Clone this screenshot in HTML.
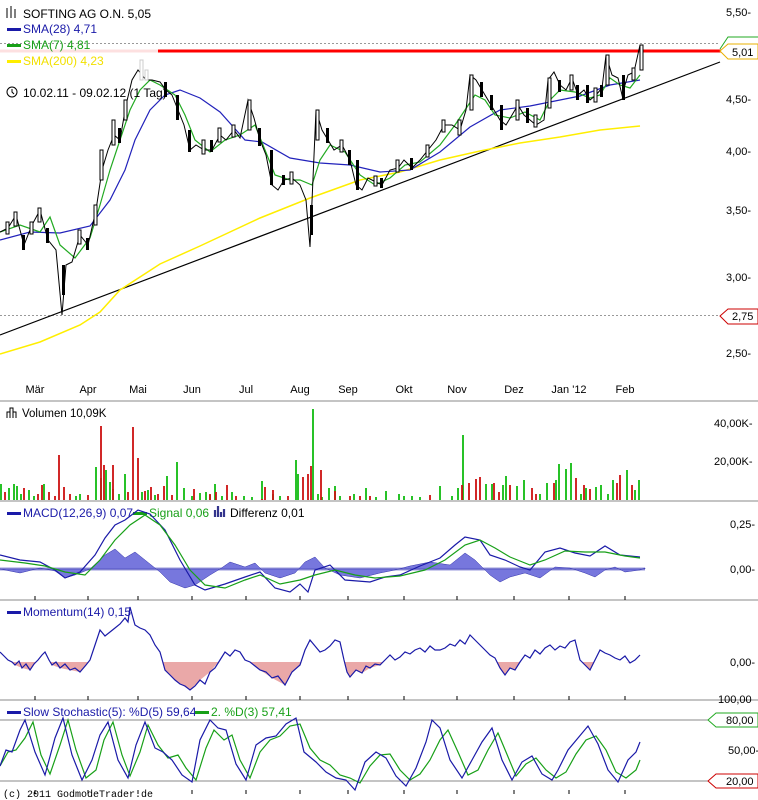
<!DOCTYPE html>
<html><head><meta charset="utf-8"><style>
html,body{margin:0;padding:0;background:#fff;}
svg{display:block;font-family:"Liberation Sans",sans-serif;}
</style></head><body>
<svg width="758" height="800" viewBox="0 0 758 800" xmlns="http://www.w3.org/2000/svg">
<defs>
<clipPath id="neg"><rect x="0" y="662" width="720" height="40"/></clipPath>
</defs>
<!-- MAIN -->
<line x1="0" y1="43.5" x2="720" y2="43.5" stroke="#999" stroke-dasharray="2,2"/>
<line x1="0" y1="315.5" x2="720" y2="315.5" stroke="#999" stroke-dasharray="2,2"/>
<line x1="0" y1="51" x2="158" y2="51" stroke="#fde0e0" stroke-width="3"/>
<line x1="158" y1="51" x2="722" y2="51" stroke="#f00" stroke-width="3"/>
<line x1="0" y1="335" x2="720" y2="62" stroke="#000" stroke-width="1.2"/>
<polyline fill="none" stroke="#ffee00" stroke-width="1.5" points="0,354 40,342 80,325 100,312 120,290 160,264 200,246 260,218 310,198 360,180 400,172 440,160 480,151 520,143 560,137 600,130 640,126"/>
<polyline fill="none" stroke="#2222bb" stroke-width="1.2" points="0,240 30,232 60,233 90,226 110,200 125,170 135,140 150,110 165,95 180,90 200,98 220,112 245,140 262,142 290,158 320,163 350,165 380,172 410,170 440,152 470,127 500,110 530,106 550,102 580,96 610,85 640,80"/>
<polyline fill="none" stroke="#22aa22" stroke-width="1.2" points="0,232 20,225 40,232 50,217 60,245 75,258 90,238 100,205 110,170 120,140 130,110 140,90 150,80 160,85 175,95 185,115 195,140 210,152 225,140 240,135 255,125 265,150 275,175 290,180 300,180 312,185 320,160 330,145 345,152 360,175 375,185 390,178 405,165 420,162 440,145 455,125 465,110 475,95 485,100 495,115 510,118 525,112 540,120 550,100 560,90 575,92 590,98 600,95 610,78 620,85 630,88 640,75"/>
<polyline fill="none" stroke="#000" stroke-width="1" points="0,232 8,228 16,215 24,245 32,225 40,210 48,240 56,250 62,315 66,265 72,262 80,235 88,245 96,210 102,170 108,150 114,135 120,140 126,105 132,80 138,70 146,80 152,80 160,82 166,90 172,95 178,110 184,125 190,150 196,145 204,150 212,150 220,135 226,140 234,130 240,138 248,100 254,118 260,140 266,155 272,185 278,190 284,180 292,178 300,185 306,200 310,247 316,110 322,130 328,140 334,150 342,145 350,160 356,185 362,190 368,178 376,182 382,185 390,170 398,168 404,160 412,168 420,160 428,150 436,140 444,125 452,125 460,130 466,110 470,75 476,80 482,90 488,100 494,110 500,120 506,125 512,115 518,105 524,115 530,120 536,125 544,120 548,80 554,72 560,85 566,90 572,78 578,95 584,90 590,100 596,95 602,88 606,55 612,75 618,78 622,95 628,75 634,72 640,45"/>
<g fill="#fff" stroke="#000" stroke-width="1">
<rect x="6" y="222" width="3" height="12"/><rect x="14" y="212" width="3" height="14"/><rect x="30" y="222" width="3" height="12"/><rect x="38" y="208" width="3" height="14"/><rect x="78" y="230" width="3" height="14"/><rect x="94" y="205" width="3" height="20"/><rect x="100" y="150" width="3" height="30"/><rect x="112" y="120" width="3" height="25"/><rect x="124" y="100" width="3" height="20"/><rect x="140" y="60" width="3" height="20" stroke="#ccc"/><rect x="145" y="70" width="3" height="10" stroke="#ccc"/>
<rect x="202" y="140" width="3" height="14"/><rect x="218" y="128" width="3" height="14"/><rect x="232" y="125" width="3" height="12"/><rect x="248" y="100" width="3" height="30"/><rect x="290" y="172" width="3" height="12"/><rect x="316" y="110" width="3" height="30"/><rect x="340" y="140" width="3" height="12"/><rect x="374" y="176" width="3" height="10"/><rect x="396" y="160" width="3" height="12"/><rect x="426" y="145" width="3" height="12"/><rect x="442" y="120" width="3" height="12"/><rect x="458" y="120" width="3" height="15"/><rect x="470" y="75" width="3" height="35"/><rect x="516" y="100" width="3" height="20"/><rect x="534" y="115" width="3" height="12"/><rect x="548" y="78" width="3" height="30"/><rect x="570" y="75" width="3" height="15"/><rect x="594" y="88" width="3" height="14"/><rect x="606" y="55" width="3" height="30"/><rect x="632" y="68" width="3" height="12"/><rect x="640" y="45" width="3" height="25"/>
</g>
<g fill="#000"><rect x="22" y="235" width="3" height="15"/><rect x="46" y="228" width="3" height="15"/><rect x="62" y="265" width="3" height="30"/><rect x="86" y="238" width="3" height="12"/><rect x="118" y="128" width="3" height="15"/><rect x="164" y="82" width="3" height="15"/><rect x="176" y="95" width="3" height="25"/><rect x="188" y="130" width="3" height="22"/><rect x="210" y="140" width="3" height="12"/><rect x="258" y="128" width="3" height="18"/><rect x="270" y="150" width="3" height="35"/><rect x="282" y="175" width="3" height="10"/><rect x="310" y="205" width="3" height="30"/><rect x="326" y="128" width="3" height="15"/><rect x="348" y="150" width="3" height="15"/><rect x="356" y="160" width="3" height="30"/><rect x="380" y="178" width="3" height="10"/><rect x="410" y="158" width="3" height="12"/><rect x="480" y="82" width="3" height="15"/><rect x="490" y="95" width="3" height="15"/><rect x="500" y="105" width="3" height="25"/><rect x="526" y="108" width="3" height="15"/><rect x="558" y="80" width="3" height="12"/><rect x="576" y="85" width="3" height="15"/><rect x="586" y="85" width="3" height="18"/><rect x="600" y="85" width="3" height="12"/><rect x="622" y="75" width="3" height="25"/></g>
<!-- axis labels -->
<g font-size="11" fill="#000">
<text x="726" y="16">5,50-</text><text x="726" y="103">4,50-</text><text x="726" y="155">4,00-</text><text x="726" y="214">3,50-</text><text x="726" y="281">3,00-</text><text x="726" y="357">2,50-</text>
</g>
<polygon points="720,51 728,44 758,44 758,59 728,59" fill="#fff" stroke="#e8b000"/>
<polyline points="720,49 728,37 758,37" fill="none" stroke="#22aa22"/>
<text x="732" y="56" font-size="11">5,01</text>
<polygon points="720,316 728,309 758,309 758,324 728,324" fill="#fff" stroke="#c00"/>
<text x="732" y="320" font-size="11">2,75</text>
<!-- legend -->
<g font-size="12">
<g stroke="#000" stroke-width="1"><line x1="7" y1="8" x2="7" y2="18"/><line x1="11" y1="6" x2="11" y2="18"/><line x1="15" y1="9" x2="15" y2="18"/></g>
<text x="23" y="18" fill="#000">SOFTING AG O.N. 5,05</text>
<rect x="7" y="28" width="14" height="3" fill="#1a1aa8"/><text x="23" y="33" fill="#1a1aa8">SMA(28) 4,71</text>
<rect x="7" y="44" width="14" height="3" fill="#18a018"/><text x="23" y="49" fill="#18a018">SMA(7) 4,81</text>
<rect x="7" y="60" width="14" height="3" fill="#ffee00"/><text x="23" y="65" fill="#f2e000">SMA(200) 4,23</text>
<circle cx="12" cy="92" r="5" fill="none" stroke="#000"/><polyline points="12,89 12,92 14,94" fill="none" stroke="#000"/>
<text x="23" y="97" fill="#000">10.02.11 - 09.02.12 (1 Tag)</text>
</g>
<!-- months -->
<g font-size="11" text-anchor="middle" fill="#000">
<text x="35" y="393">Mär</text><text x="88" y="393">Apr</text><text x="138" y="393">Mai</text><text x="192" y="393">Jun</text><text x="246" y="393">Jul</text><text x="300" y="393">Aug</text><text x="348" y="393">Sep</text><text x="404" y="393">Okt</text><text x="457" y="393">Nov</text><text x="514" y="393">Dez</text><text x="569" y="393">Jan '12</text><text x="625" y="393">Feb</text>
</g>
<g stroke="#888"><line x1="0" y1="401" x2="758" y2="401"/><line x1="0" y1="501" x2="758" y2="501"/><line x1="0" y1="600" x2="758" y2="600"/><line x1="0" y1="700" x2="758" y2="700"/></g>
<g stroke="#000"><path d="M35 596V600M88 596V600M138 596V600M192 596V600M246 596V600M300 596V600M348 596V600M404 596V600M457 596V600M514 596V600M569 596V600M625 596V600M35 696V700M88 696V700M138 696V700M192 696V700M246 696V700M300 696V700M348 696V700M404 696V700M457 696V700M514 696V700M569 696V700M625 696V700M35 790V794M88 790V794M138 790V794M192 790V794M246 790V794M300 790V794M348 790V794M404 790V794M457 790V794M514 790V794M569 790V794M625 790V794"/></g>
<!-- VOLUME -->
<g font-size="11.5"><path d="M7 418V412H10V418M10 412V408H13V418M13 412H16V418" fill="none" stroke="#000"/><text x="22" y="417">Volumen 10,09K</text>
<text x="714" y="427" font-size="11">40,00K-</text><text x="714" y="465" font-size="11">20,00K-</text></g>
<path fill="none" stroke="#11bb11" stroke-width="1.8" d="M1 500V484M9 500V488M14 500V484M17 500V486M21 500V494M29 500V490M34 500V496M44 500V484M76 500V496M80 500V494M96 500V467M101 500V478M106 500V470M110 500V482M113 500V489M119 500V494M125 500V474M142 500V492M148 500V490M155 500V495M167 500V476M177 500V462M184 500V488M192 500V496M200 500V493M206 500V492M210 500V495M215 500V484M222 500V496M232 500V492M244 500V496M252 500V497M262 500V481M273 500V494M280 500V496M296 500V460M298 500V474M313 500V409M318 500V494M322 500V497M329 500V488M335 500V486M340 500V496M354 500V494M366 500V488M376 500V497M386 500V491M399 500V494M404 500V496M412 500V496M420 500V497M440 500V486M452 500V496M458 500V488M463 500V435M486 500V484M492 500V484M503 500V485M506 500V476M517 500V486M524 500V480M540 500V494M547 500V483M556 500V480M559 500V464M566 500V469M571 500V463M581 500V494M586 500V488M596 500V487M601 500V485M608 500V494M613 500V480M627 500V470M635 500V490M639 500V480"/>
<path fill="none" stroke="#cc1111" stroke-width="1.8" d="M5 500V492M24 500V488M38 500V494M42 500V485M49 500V492M55 500V496M59 500V455M64 500V487M70 500V494M88 500V495M101 500V426M104 500V465M113 500V465M128 500V492M133 500V427M138 500V458M145 500V491M151 500V487M158 500V494M164 500V486M172 500V495M194 500V489M210 500V494M216 500V492M227 500V485M236 500V496M262 500V499M265 500V487M273 500V490M288 500V496M303 500V477M308 500V474M311 500V466M321 500V470M335 500V491M350 500V496M360 500V496M370 500V496M430 500V495M462 500V485M469 500V483M476 500V479M480 500V477M494 500V483M499 500V492M510 500V485M532 500V488M536 500V494M554 500V483M576 500V478M584 500V485M590 500V489M617 500V483M620 500V475M632 500V485"/>
<!-- MACD -->
<g font-size="12"><rect x="7" y="512" width="14" height="3" fill="#1a1aa8"/><text x="23" y="517" fill="#1a1aa8">MACD(12,26,9) 0,07</text>
<rect x="133" y="512" width="14" height="3" fill="#18a018"/><text x="149" y="517" fill="#18a018">Signal 0,06</text>
<path d="M215 517V510M218 517V506M221 517V512M224 517V509" stroke="#33348c" stroke-width="2.2"/><text x="230" y="517" fill="#000">Differenz 0,01</text>
<text x="730" y="528" font-size="11">0,25-</text><text x="730" y="573" font-size="11">0,00-</text></g>
<path d="M0 569H645" stroke="#9999dd" stroke-width="3"/>
<path fill="#7777dd" stroke="#3333aa" stroke-width="0.5" d="M0 569 L20 573 L40 568 L55 571 L65 578 L75 575 L90 569 L105 555 L115 549 L125 558 L135 552 L145 560 L160 572 L170 582 L185 588 L195 585 L210 575 L220 569 L230 562 L245 567 L255 563 L265 573 L280 578 L295 573 L305 562 L315 557 L325 568 L340 575 L360 578 L380 573 L395 570 L410 566 L430 562 L450 565 L465 553 L475 560 L490 575 L500 582 L510 577 L525 573 L540 578 L555 567 L570 568 L585 573 L595 577 L605 570 L615 567 L625 572 L640 570 L645 568 L645 569 Z"/>
<polyline fill="none" stroke="#1a1aa8" stroke-width="1.2" points="0,555 20,560 40,562 55,570 65,578 80,572 95,555 105,538 115,525 125,520 138,510 150,514 165,530 180,560 195,585 205,590 225,584 245,577 260,572 275,588 290,592 300,584 308,592 315,570 330,565 345,580 370,582 385,577 400,575 420,566 440,558 455,545 465,537 480,540 490,555 505,560 520,567 530,570 545,552 560,548 575,553 590,556 605,546 620,555 640,557"/>
<polyline fill="none" stroke="#18a018" stroke-width="1.2" points="0,560 25,563 45,566 65,572 85,575 100,560 115,540 130,525 145,515 160,525 175,545 190,570 205,585 225,588 245,580 260,575 280,584 300,580 315,575 335,570 355,575 375,578 400,576 425,570 445,560 465,545 480,540 495,548 510,557 530,565 545,560 565,551 585,552 605,552 625,556 640,558"/>
<!-- MOMENTUM -->
<g font-size="12"><rect x="7" y="611" width="14" height="3" fill="#1a1aa8"/><text x="23" y="616" fill="#1a1aa8">Momentum(14) 0,15</text>
<text x="730" y="666" font-size="11">0,00-</text>
<text x="718" y="703" font-size="11">100,00</text></g>
<g clip-path="url(#neg)"><polygon fill="#eaa8a8" points="0,662 0,652 8,660 15,665 22,668 30,670 38,660 45,652 52,665 60,668 70,670 80,672 86,665 90,660 100,630 115,628 125,618 130,610 135,625 145,630 150,635 160,652 165,670 170,675 180,684 190,690 200,680 210,672 220,660 225,652 240,652 250,662 260,670 272,678 285,685 292,672 300,665 310,640 325,650 340,642 347,672 350,677 356,670 362,673 370,668 380,665 390,655 400,657 420,648 440,650 460,640 470,635 480,645 495,658 500,668 505,675 510,668 515,670 525,655 535,650 550,645 565,648 575,640 580,660 585,665 590,670 600,650 610,655 620,660 630,663 640,655 640,662"/></g>
<polyline fill="none" stroke="#1a1aa8" stroke-width="1.2" points="0,652 4,656 8,660 12,662 15,665 19,661 22,668 26,664 30,670 34,664 38,660 42,655 45,652 49,660 52,665 56,662 60,668 65,664 70,670 75,668 80,672 86,665 90,660 95,645 100,630 105,636 110,632 115,628 120,624 125,618 128,622 130,607 133,618 135,625 140,628 145,630 150,635 155,645 160,652 165,670 170,675 175,680 180,684 185,686 190,690 195,686 200,680 205,684 210,672 215,668 220,660 225,652 230,656 235,650 240,652 245,660 250,662 255,666 260,670 266,672 272,678 278,676 285,685 292,672 300,665 305,650 310,640 315,646 320,652 325,650 330,646 335,640 340,642 344,660 347,672 350,677 356,670 362,673 366,666 370,668 375,664 380,665 385,660 390,655 395,660 400,657 405,652 410,654 415,650 420,648 425,652 430,646 435,650 440,650 445,648 450,644 455,646 460,640 465,644 470,635 475,640 480,645 485,650 490,655 495,658 500,668 505,675 510,668 515,670 520,662 525,655 530,658 535,650 540,654 545,648 550,645 555,650 560,646 565,648 570,642 575,640 580,660 585,665 590,670 595,660 600,650 605,653 610,655 615,658 620,660 625,656 630,663 635,660 640,655"/>
<!-- STOCH -->
<g stroke="#888"><line x1="0" y1="720" x2="720" y2="720"/><line x1="0" y1="781" x2="720" y2="781"/></g>
<g font-size="12"><rect x="7" y="711" width="14" height="3" fill="#1a1aa8"/><text x="23" y="716" fill="#1a1aa8">Slow Stochastic(5): %D(5) 59,64</text>
<rect x="195" y="711" width="14" height="3" fill="#18a018"/><text x="211" y="716" fill="#18a018">2. %D(3) 57,41</text></g>
<polygon points="708,720 716,713 758,713 758,727 716,727" fill="#fff" stroke="#22aa22"/><text x="726" y="724" font-size="11">80,00</text>
<text x="728" y="754" font-size="11">50,00-</text>
<polygon points="708,781 716,774 758,774 758,788 716,788" fill="#fff" stroke="#c00"/><text x="726" y="785" font-size="11">20,00</text>
<polyline fill="none" stroke="#18a018" stroke-width="1.2" points="0,766 8,752 16,750 25,738 33,722 41,755 50,774 60,745 68,720 76,750 86,778 96,770 104,740 113,722 122,755 130,776 140,752 148,725 158,745 168,758 178,755 186,768 196,780 206,748 214,730 224,740 232,735 240,760 250,778 260,752 270,740 280,736 290,726 300,724 310,748 320,760 330,765 340,775 350,778 360,783 370,766 380,755 390,754 400,770 410,780 420,774 430,760 440,740 448,730 458,752 468,775 478,770 488,750 498,733 506,752 516,776 526,764 536,758 546,770 556,778 566,772 576,754 586,740 596,736 606,750 616,772 626,778 636,770 640,760"/>
<polyline fill="none" stroke="#1a1aa8" stroke-width="1.2" points="0,766 6,750 12,752 20,730 25,720 35,752 45,775 55,738 63,718 72,755 82,780 92,760 100,735 108,722 118,760 128,778 136,745 145,722 155,748 163,752 172,760 182,775 192,782 200,740 210,720 218,728 226,730 236,764 246,780 256,745 266,738 276,736 286,724 296,718 304,752 316,762 326,772 336,778 346,780 355,790 365,762 376,752 386,758 396,776 406,786 416,768 426,742 432,720 440,728 450,760 462,778 472,760 482,742 492,728 502,760 512,780 522,762 532,756 542,774 552,780 558,770 568,750 578,738 588,726 598,744 608,770 618,782 628,760 636,752 640,742"/>
<text x="3" y="797" font-family="Liberation Mono,monospace" font-size="10" fill="#000">(c) 2011 GodmodeTrader.de</text>
</svg>
</body></html>
